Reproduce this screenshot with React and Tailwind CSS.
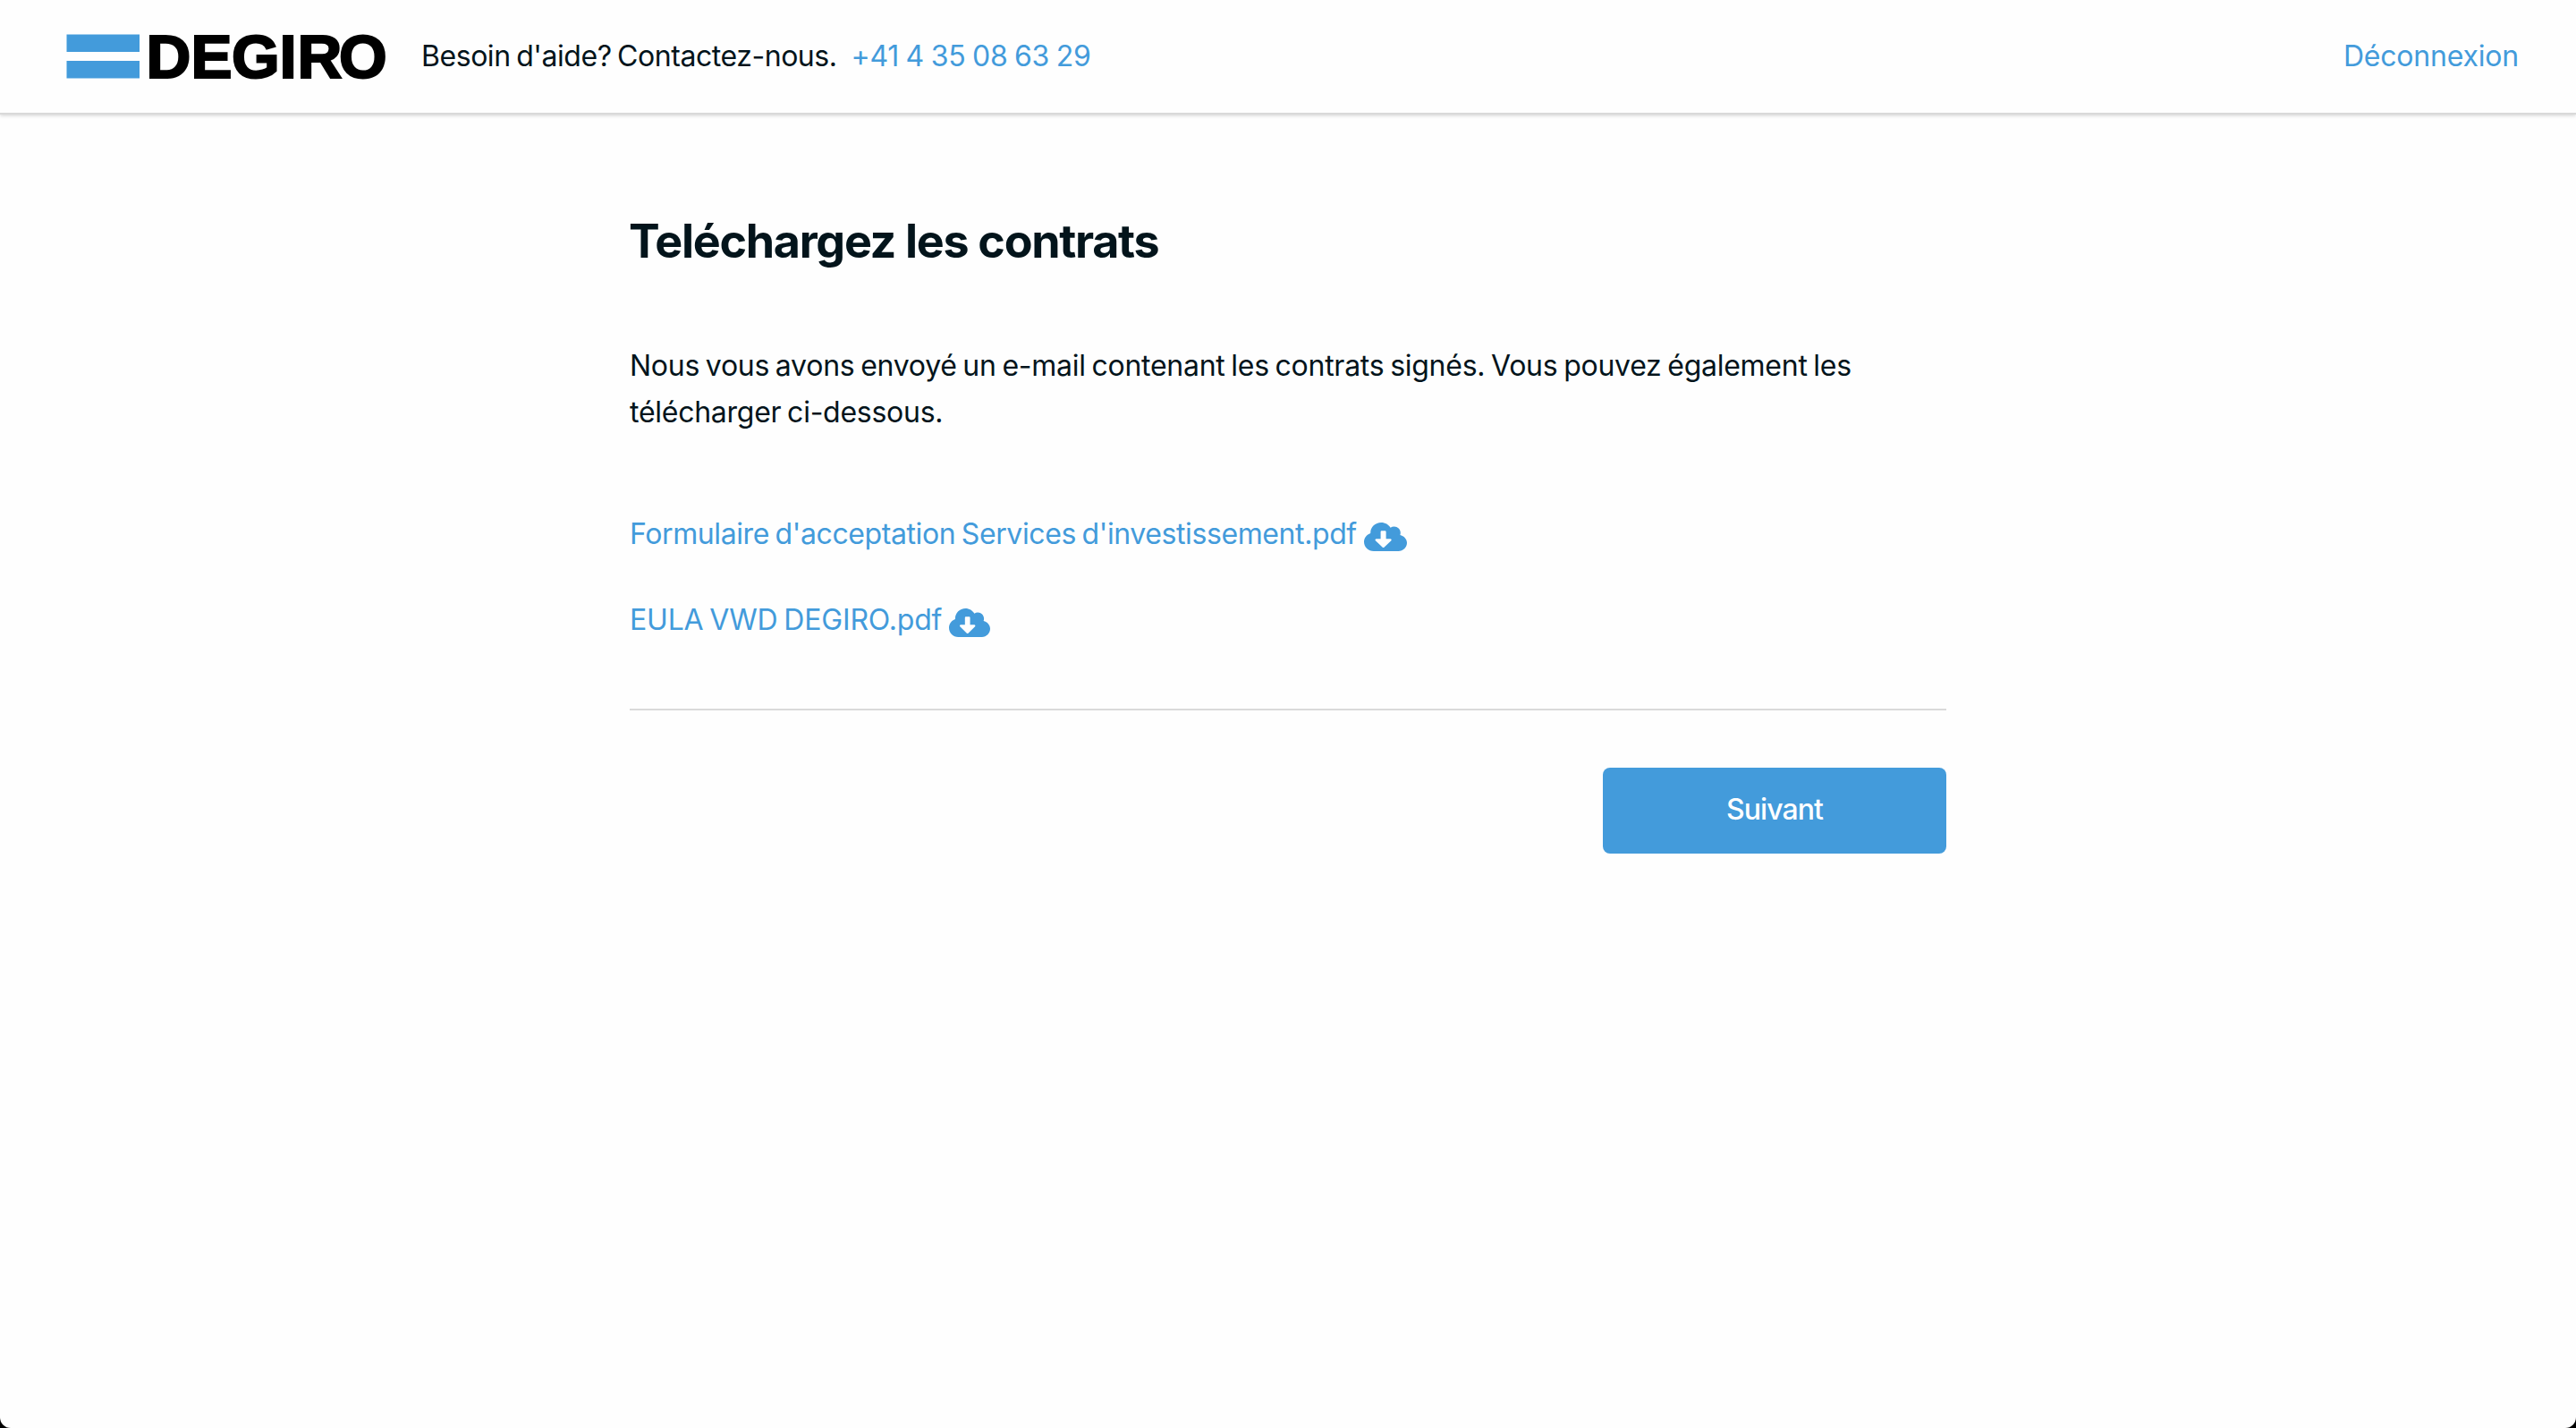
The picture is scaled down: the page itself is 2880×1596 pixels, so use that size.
const contracts = [
  { id: 1, name: "Formulaire d'acceptation Services d'investissement.pdf", tracking: "tracking-[-0.4px]", icon: "w-12" },
  { id: 2, name: "EULA VWD DEGIRO.pdf", tracking: "tracking-[-0.18px]", icon: "w-[46px]" },
];

function Logo() {
  return (
    <svg className="w-[360px] h-20 shrink-0" viewBox="0 -15 360 80">
      <rect x="0.5" y="0.5" width="81.5" height="19.5" fill="#439bdb" />
      <rect x="0.5" y="30" width="81.5" height="19.5" fill="#439bdb" />
      <text
        className="font-['Liberation_Sans',sans-serif]"
        x="89.5 139.5 185 238.5 258.5 305"
        y="48.6"
        fontSize="69"
        fontWeight="700"
        fill="#000"
        stroke="#000"
        strokeWidth="2.2"
      >
        DEGIRO
      </text>
    </svg>
  );
}

function CloudDownload({ width }) {
  return (
    <svg className={`${width} h-8 mt-1.5 shrink-0`} viewBox="0 32 640 448" preserveAspectRatio="none" fill="currentColor">
      <path d="M537.6 226.6c4.1-10.7 6.4-22.4 6.4-34.6 0-53-43-96-96-96-19.7 0-38.1 6-53.3 16.2C367 64.2 315.3 32 256 32c-88.4 0-160 71.6-160 160 0 2.7.1 5.4.2 8.1C40.2 219.8 0 273.2 0 336c0 79.5 64.5 144 144 144h368c70.7 0 128-57.3 128-128 0-61.9-44-113.6-102.4-125.4zm-132.9 88.7L299.3 420.7c-6.2 6.2-16.4 6.2-22.6 0L171.3 315.3c-10.1-10.1-2.9-27.3 11.3-27.3H248V176c0-8.8 7.2-16 16-16h48c8.8 0 16 7.2 16 16v112h65.4c14.2 0 21.4 17.2 11.3 27.3z" />
    </svg>
  );
}

function Header() {
  return (
    <header className="flex items-center h-[126px] pl-[74px] pr-16 shadow-[0_2px_0_#d9d9d9,0_3px_4px_#00000030]">
      <Logo />
      <p className="ml-[37px] text-[#03141b] tracking-[-0.45px] [word-spacing:-2px]">Besoin d'aide? Contactez-nous.</p>
      <a href="#" className="ml-4 text-[#439bdb] tracking-[-0.3px] [word-spacing:-1px]">+41 4 35 08 63 29</a>
      <a href="#" className="ml-auto text-[#439bdb] tracking-[-0.2px]">Déconnexion</a>
    </header>
  );
}

function App() {
  return (
    <div className="bg-black">
      <div className="h-[1596px] bg-[#fefefe] rounded-b-[12px] font-['Inter','Liberation_Sans',sans-serif] text-[32px] leading-[52px] whitespace-nowrap">
        <Header />
        <main className="w-[1472px] mx-auto pt-[108px] text-[#03141b]">
          <h1 className="-ml-px text-[52px] leading-[72px] font-bold tracking-[-1.3px]">Teléchargez les contrats</h1>
          <p className="mt-[77px] tracking-[-0.26px] [word-spacing:-2px]">
            Nous vous avons envoyé un e-mail contenant les contrats signés. Vous pouvez également les
            <br />
            télécharger ci-dessous.
          </p>

          <ul className="mt-[84px] flex flex-col gap-11 text-[#439bdb] [word-spacing:-2px]">
            {contracts.map((doc) => (
              <li key={doc.id}>
                <a href="#" className="inline-flex items-center gap-2">
                  <span className={doc.tracking}>{doc.name}</span>
                  <CloudDownload width={doc.icon} />
                </a>
              </li>
            ))}
          </ul>

          <div className="mt-[73px] pt-16 border-t-2 border-[#dadada] flex justify-end">
            <button className="w-96 h-24 pb-0.5 rounded-lg bg-[#439bdb] text-white font-medium tracking-[-0.9px]">Suivant</button>
          </div>
        </main>
      </div>
    </div>
  );
}

export default App;
